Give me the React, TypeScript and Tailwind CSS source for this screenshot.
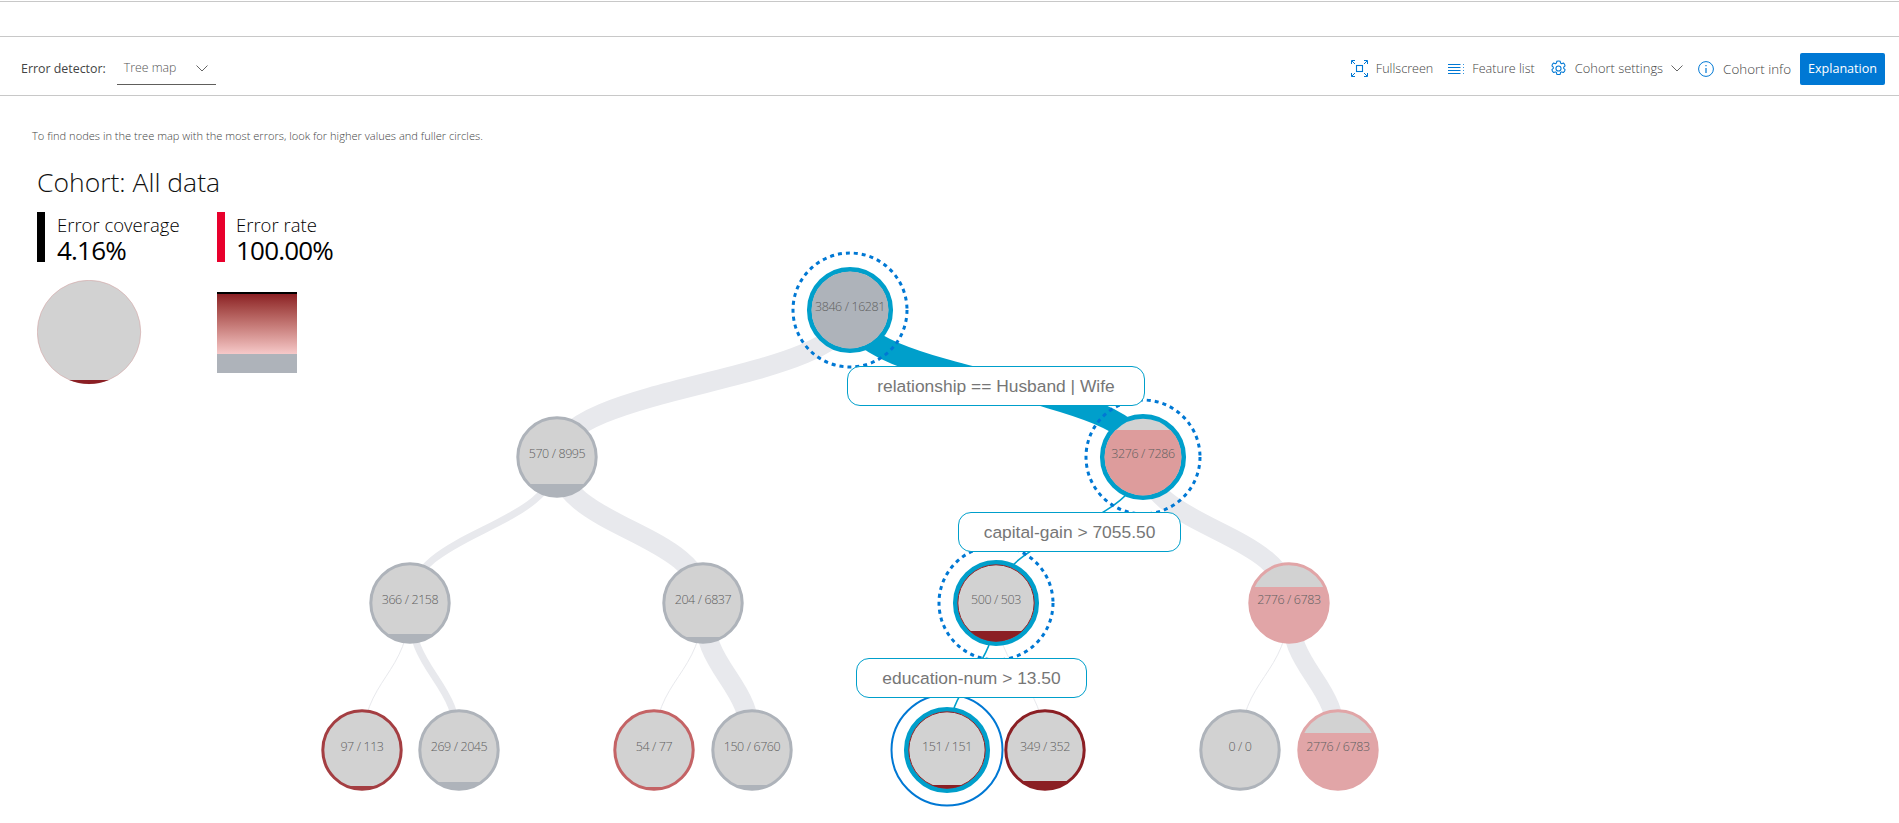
import React from "react";

type N = { x: number; y: number; t: string; fillY?: number; fill?: string; stroke: string; sel?: boolean; inner?: string };

const G = "#aeb3ba";
const BLUE = "#009fcb";
const nodes: N[] = [
  { x: 850, y: 310, t: "3846 / 16281", fillY: 260, fill: G, stroke: BLUE, sel: true },
  { x: 557, y: 457, t: "570 / 8995", fillY: 484, fill: G, stroke: G },
  { x: 1143, y: 457, t: "3276 / 7286", fillY: 430, fill: "#dd9c9c", stroke: BLUE, sel: true },
  { x: 410, y: 603, t: "366 / 2158", fillY: 634, fill: G, stroke: G },
  { x: 703, y: 603, t: "204 / 6837", fillY: 637, fill: G, stroke: G },
  { x: 996, y: 603, t: "500 / 503", fillY: 631, fill: "#8b1f24", stroke: BLUE, sel: true, inner: "#8b1f24" },
  { x: 1289, y: 603, t: "2776 / 6783", fillY: 587, fill: "#e1a5a7", stroke: "#e1a5a7" },
  { x: 362, y: 750, t: "97 / 113", fillY: 786, fill: "#a43e42", stroke: "#a43e42" },
  { x: 459, y: 750, t: "269 / 2045", fillY: 782, fill: G, stroke: G },
  { x: 654, y: 750, t: "54 / 77", fillY: 787, fill: "#c46365", stroke: "#c46365" },
  { x: 752, y: 750, t: "150 / 6760", fillY: 785, fill: G, stroke: G },
  { x: 947, y: 750, t: "151 / 151", fillY: 785, fill: "#8b1f24", stroke: BLUE, sel: true, inner: "#8b1f24" },
  { x: 1045, y: 750, t: "349 / 352", fillY: 781, fill: "#8b1f24", stroke: "#8b1f24" },
  { x: 1240, y: 750, t: "0 / 0", stroke: G },
  { x: 1338, y: 750, t: "2776 / 6783", fillY: 733, fill: "#e1a5a7", stroke: "#e1a5a7" },
];

const link = (a: number, b: number) => {
  const p = nodes[a];
  const c = nodes[b];
  const m = (p.y + c.y) / 2;
  return `M${p.x} ${p.y} C${p.x} ${m} ${c.x} ${m} ${c.x} ${c.y}`;
};

const links: [number, number, number, string][] = [
  [0, 1, 20, "#e8e9ed"],
  [1, 3, 7, "#e8e9ed"],
  [1, 4, 20, "#e8e9ed"],
  [2, 6, 19, "#e8e9ed"],
  [3, 7, 1, "#e8e9ed"],
  [3, 8, 7, "#e8e9ed"],
  [4, 9, 1, "#e8e9ed"],
  [4, 10, 20, "#e8e9ed"],
  [5, 12, 1, "#e8e9ed"],
  [6, 13, 1, "#e8e9ed"],
  [6, 14, 18, "#e8e9ed"],
  [0, 2, 22, BLUE],
  [2, 5, 1.5, BLUE],
  [5, 11, 1.5, BLUE],
];

function Tree() {
  return (
    <svg className="absolute inset-0 w-full h-full" viewBox="0 165 1899 658">
      <defs>
        {nodes.map((n, i) => (
          <clipPath id={`c${i}`} key={i}>
            <circle cx={n.x} cy={n.y} r={n.sel ? 38.5 : 39.5} />
          </clipPath>
        ))}
      </defs>
      <g fill="none">
        {links.map(([a, b, w, col], i) => (
          <path key={i} d={link(a, b)} stroke={col} strokeWidth={w} />
        ))}
      </g>
      {nodes.map((n, i) => (
        <g key={i}>
          {n.sel && i !== 11 && (
            <circle cx={n.x} cy={n.y} r={57} fill="none" stroke="#0078d4" strokeWidth={3} strokeDasharray="4 4" />
          )}
          {i === 11 && <circle cx={n.x} cy={n.y} r={55.5} fill="none" stroke="#0078d4" strokeWidth={2} />}
          <circle cx={n.x} cy={n.y} r={n.sel ? 40.7 : 39.2} fill="#d2d2d2" stroke={n.stroke} strokeWidth={n.sel ? 4.7 : 3} />
          {n.fillY !== undefined && (
            <rect x={n.x - 42} y={n.fillY} width={84} height={100} fill={n.fill} clipPath={`url(#c${i})`} />
          )}
          {n.inner && <circle cx={n.x} cy={n.y} r={38.2} fill="none" stroke={n.inner} strokeWidth={1} />}
          <text
            x={n.x}
            y={n.y + 1}
            textAnchor="middle"
            className="font-['Open_Sans',sans-serif] text-[12.5px] font-light tracking-[-0.4px]"
            fill="#5f5f5f"
          >
            {n.t}
          </text>
        </g>
      ))}
    </svg>
  );
}

function RuleLabel({ className, text }: { className: string; text: string }) {
  return (
    <div
      className={`absolute h-[40px] rounded-[13px] border border-[#009fcb] bg-white flex items-center justify-center font-['Liberation_Sans',sans-serif] text-[17.4px] text-[#767676] ${className}`}
    >
      {text}
    </div>
  );
}

function FullscreenIcon() {
  return (
    <svg width="17" height="17" viewBox="0 0 17 17" fill="none" stroke="#0078d4" strokeWidth="1">
      <rect x="5.5" y="5.5" width="6" height="6" strokeWidth="1.1" />
      <path d="M0.5 4V0.5H4M0.8 0.8L4 4M13 0.5H16.5V4M16.2 0.8L13 4M0.5 13V16.5H4M0.8 16.2L4 13M13 16.5H16.5V13M16.2 16.2L13 13" />
    </svg>
  );
}

function ListIcon() {
  return (
    <svg width="16" height="16" viewBox="0 0 16 16" fill="none" stroke="#0078d4" strokeWidth="1">
      <path d="M0 3.5H12.5M0 6.5H12.5M0 9.5H12.5M0 12.5H12.5" />
      <path d="M15 3.5H16M15 6.5H16M15 9.5H16M15 12.5H16" strokeWidth="1" opacity="0.8" />
    </svg>
  );
}

function GearIcon() {
  return (
    <svg width="17" height="17" viewBox="0 0 24 24" fill="none" stroke="#0078d4" strokeWidth="1.5" strokeLinejoin="round">
      <circle cx="12" cy="12" r="3.6" />
      <path d="M9.6 1.8c.8-.5 4-.5 4.8 0l.5 2.6c.5.2 1 .5 1.5.8l2.5-.9c.7.5 2.3 3.2 2.4 4.1l-2 1.7c.1.6.1 1.2 0 1.8l2 1.7c-.1.9-1.7 3.6-2.4 4.1l-2.5-.9c-.5.3-1 .6-1.5.8l-.5 2.6c-.8.5-4 .5-4.8 0l-.5-2.6c-.5-.2-1-.5-1.5-.8l-2.5.9c-.7-.5-2.3-3.2-2.4-4.1l2-1.7c-.1-.6-.1-1.2 0-1.8l-2-1.7c.1-.9 1.7-3.6 2.4-4.1l2.5.9c.5-.3 1-.6 1.5-.8z" />
    </svg>
  );
}

function InfoIcon() {
  return (
    <svg width="16" height="16" viewBox="0 0 16 16" fill="none" stroke="#0078d4" strokeWidth="1">
      <circle cx="8" cy="8" r="7.4" />
      <path d="M8 7V12M8 4V5.2" strokeWidth="1.2" />
    </svg>
  );
}

function Chevron() {
  return (
    <svg width="12" height="7" viewBox="0 0 12 7" fill="none" stroke="#666" strokeWidth="1">
      <path d="M0.5 0.5L6 6L11.5 0.5" />
    </svg>
  );
}

export default function App() {
  return (
    <div className="h-[823px] w-full overflow-hidden bg-white font-['Open_Sans',sans-serif] text-black">
      <div className="mt-[1px] h-[36px] border-y border-[#c8c8c8]" />
      <div className="h-[59px] pt-[6px] border-b border-[#c8c8c8] flex items-center justify-between pl-[21px] pr-[14px]">
        <div className="flex items-center gap-[11px]">
          <span className="text-[12.4px] text-[#444]">Error detector:</span>
          <div className="w-[99px] h-[31px] border-b border-[#605e5c] flex items-center justify-between pl-[7px] pr-[8px] text-[12.3px] font-light text-[#555]">
            <span>Tree map</span>
            <Chevron />
          </div>
        </div>
        <div className="flex items-center text-[12.6px] font-light text-[#444]">
          <div className="flex items-center gap-[8px] mr-[15px]"><FullscreenIcon /><span>Fullscreen</span></div>
          <div className="flex items-center gap-[8px] mr-[15px]"><ListIcon /><span>Feature list</span></div>
          <div className="flex items-center gap-[8px] mr-[15px]"><GearIcon /><span className="text-[12.9px]">Cohort settings</span><Chevron /></div>
          <div className="flex items-center gap-[9px] mr-[9px]"><InfoIcon /><span className="text-[13.4px]">Cohort info</span></div>
          <button className="w-[85px] h-[32px] rounded-[2px] bg-[#0078d4] text-white text-[12.6px] font-normal">Explanation</button>
        </div>
      </div>
      <p className="pl-[32px] pt-[33px] text-[11.1px] font-light text-[#444] leading-[14px]">
        To find nodes in the tree map with the most errors, look for higher values and fuller circles.
      </p>
      <div className="relative mt-[22px] h-[658px]">
        <Tree />
        <div className="relative w-[340px] pl-[37px]">
          <h2 className="text-[26.5px] font-light leading-[35px] text-[#111]">Cohort: All data</h2>
          <div className="flex mt-[12px]">
            <div className="flex w-[180px] shrink-0 gap-[12px]">
              <div className="w-[8px] h-[50px] bg-black" />
              <div>
                <div className="text-[18.5px] font-light leading-[24px] mt-[1px] whitespace-nowrap">Error coverage</div>
                <div className="text-[26px] leading-[26px] tracking-[-0.8px]">4.16%</div>
              </div>
            </div>
            <div className="flex gap-[11px]">
              <div className="w-[8px] h-[50px] bg-[#e8002c]" />
              <div>
                <div className="text-[18.5px] font-light leading-[24px] mt-[1px] whitespace-nowrap">Error rate</div>
                <div className="text-[26px] leading-[26px] tracking-[-0.8px]">100.00%</div>
              </div>
            </div>
          </div>
          <div className="flex items-start mt-[17px]">
            <svg width="180" height="106" viewBox="0 0 180 106" className="shrink-0">
              <defs>
                <clipPath id="lg"><circle cx="52" cy="52" r="52" /></clipPath>
              </defs>
              <circle cx="52" cy="52" r="51.7" fill="#d2d2d2" stroke="#d3a5a5" strokeWidth="0.6" />
              <rect x="0" y="100" width="104" height="6" fill="#8b1f24" clipPath="url(#lg)" />
            </svg>
            <div className="mt-[12px] w-[80px] h-[81px] flex flex-col">
              <div className="h-[2px] bg-black" />
              <div className="h-[60px] bg-gradient-to-b from-[#8b1f24] to-[#f6c9c9]" />
              <div className="h-[19px] bg-[#aeb3ba]" />
            </div>
          </div>
        </div>
        <RuleLabel className="left-[847px] top-[201px] w-[298px]" text="relationship == Husband | Wife" />
        <RuleLabel className="left-[958px] top-[347px] w-[223px]" text="capital-gain > 7055.50" />
        <RuleLabel className="left-[856px] top-[493px] w-[231px]" text="education-num > 13.50" />
      </div>
    </div>
  );
}
